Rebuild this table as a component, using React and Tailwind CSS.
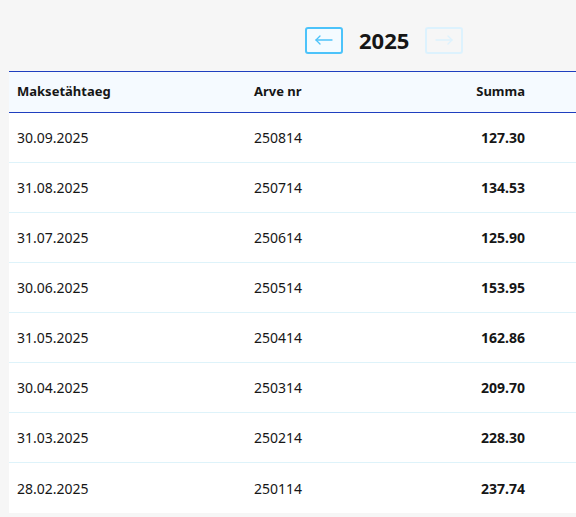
import React from "react";

const rows = [
  ["30.09.2025", "250814", "127.30"],
  ["31.08.2025", "250714", "134.53"],
  ["31.07.2025", "250614", "125.90"],
  ["30.06.2025", "250514", "153.95"],
  ["31.05.2025", "250414", "162.86"],
  ["30.04.2025", "250314", "209.70"],
  ["31.03.2025", "250214", "228.30"],
  ["28.02.2025", "250114", "237.74"],
];

function Arrow({ dir }) {
  return (
    <svg width="18" height="10" viewBox="0 0 18 10" fill="none" stroke="currentColor" strokeWidth="1.3" strokeLinecap="round" strokeLinejoin="round">
      {dir === "left" ? (
        <>
          <path d="M1 5h16" />
          <path d="M5 1L1 5l4 4" />
        </>
      ) : (
        <>
          <path d="M1 5h16" />
          <path d="M13 1l4 4-4 4" />
        </>
      )}
    </svg>
  );
}

export default function App() {
  return (
    <div
      className="w-[576px] h-[517px] overflow-hidden bg-[#f6f6f6] text-[#161616]"
      style={{ fontFamily: '"Noto Sans", "Liberation Sans", sans-serif' }}
    >
      <div className="w-[750px] ml-[9px]">
        <div className="h-[71px] flex items-center justify-center gap-4 pt-[9px]">
          <button className="w-[38px] h-[27px] rounded-[3px] border-2 border-[#4cc3fa] bg-[#f4fbff] text-[#4cc3fa] flex items-center justify-center">
            <Arrow dir="left" />
          </button>
          <span className="text-[22px] font-bold leading-none w-[50px] text-center">2025</span>
          <button className="w-[38px] h-[27px] rounded-[3px] border-2 border-[#ddf2fd] text-[#ddf2fd] flex items-center justify-center">
            <Arrow dir="right" />
          </button>
        </div>
        <div className="bg-white">
          <div className="flex h-[42px] items-center bg-[#f5faff] border-y border-[#1f3fbf] text-[13px] font-bold">
            <div className="w-[237px] px-2">Maksetähtaeg</div>
            <div className="w-[154px] px-2">Arve nr</div>
            <div className="w-[133px] px-2 text-right">Summa</div>
            <div className="flex-1" />
          </div>
          {rows.map((r, i) => (
            <div
              key={i}
              className={`flex h-[50px] items-center text-[14px] ${i < rows.length - 1 ? "border-b border-[#def3fa]" : ""}`}
            >
              <div className="w-[237px] px-2">{r[0]}</div>
              <div className="w-[154px] px-2">{r[1]}</div>
              <div className="w-[133px] px-2 text-right font-bold">{r[2]}</div>
              <div className="flex-1" />
            </div>
          ))}
        </div>
      </div>
    </div>
  );
}
